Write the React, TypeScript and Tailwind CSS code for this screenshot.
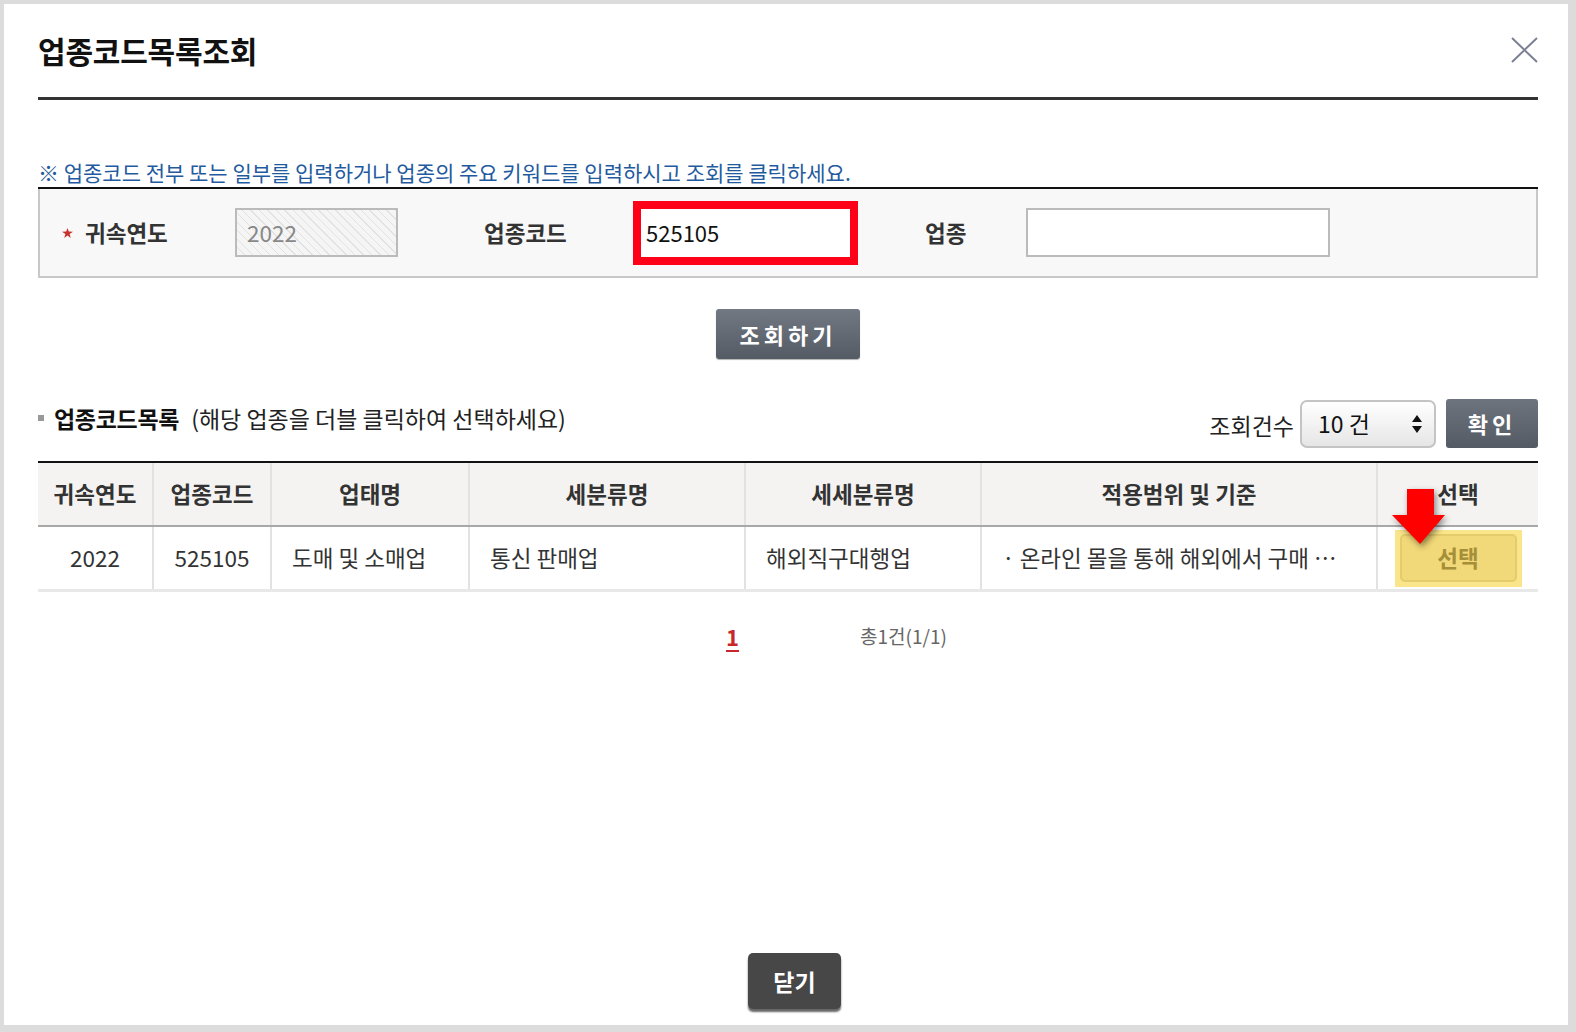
import React from 'react';

const cols = [
  { title: '귀속연도', value: '2022', center: true },
  { title: '업종코드', value: '525105', center: true },
  { title: '업태명', value: '도매 및 소매업', center: false },
  { title: '세분류명', value: '통신 판매업', center: false },
  { title: '세세분류명', value: '해외직구대행업', center: false },
  { title: '적용범위 및 기준', value: '· 온라인 몰을 통해 해외에서 구매 ⋯', center: false },
];

export default function App() {
  return (
    <div className="h-[1032px] w-[1576px] overflow-hidden bg-[#dcdcdc] pl-[4px] pt-[4px] font-[Noto_Sans_CJK_KR,sans-serif]">
      <div className="relative flex h-[1021px] w-[1564px] flex-col bg-white pl-[34px] pr-[30px]">
        {/* header */}
        <div className="flex h-[93px] items-start justify-between pt-[25px]">
          <h1 className="text-[30px] font-bold leading-[42px] tracking-[-0.2px] text-[#111]">
            업종코드목록조회
          </h1>
          <button className="mt-[8px]">
            <svg width="27" height="26" viewBox="0 0 27 26">
              <path d="M1 1 L26 25 M26 1 L1 25" stroke="#7b8194" strokeWidth="2" fill="none" />
            </svg>
          </button>
        </div>
        <div className="h-[3px] bg-[#333]" />

        <p className="mt-[60px] text-[21px] leading-[25px] text-[#1f5b9e]">
          ※ 업종코드 전부 또는 일부를 입력하거나 업종의 주요 키워드를 입력하시고 조회를 클릭하세요.
        </p>

        {/* search box */}
        <div className="mt-[2px] border-t-2 border-[#111]">
          <div className="flex h-[89px] items-center border-x-2 border-b-2 border-[#c8c8c8] bg-[#f8f8f8] pl-[22px]">
            <span className="w-[23px]">
              <svg width="11" height="10" viewBox="0 0 11 10">
                <path d="M5.5 0 L6.8 3.6 L11 3.8 L7.6 6.1 L8.8 10 L5.5 7.6 L2.2 10 L3.4 6.1 L0 3.8 L4.2 3.6 Z" fill="#c8322c" />
              </svg>
            </span>
            <span className="w-[150px] text-[22.5px] font-bold text-[#333]">귀속연도</span>
            <div className="flex h-[49px] w-[163px] items-center border-2 border-[#bbb] bg-[repeating-linear-gradient(45deg,#f5f5f5_0px,#f5f5f5_5px,#e2e2e2_5px,#e2e2e2_6px)] pl-[10px] text-[22.5px] text-[#888]">
              2022
            </div>
            <span className="ml-[86px] w-[149px] text-[22.5px] font-bold text-[#333]">업종코드</span>
            <div className="flex h-[64px] w-[225px] items-center border-[8px] border-[#ff0019] bg-white pl-[5px] text-[22px] text-[#111]">
              525105
            </div>
            <span className="ml-[67px] w-[101px] text-[22.5px] font-bold text-[#333]">업종</span>
            <div className="h-[49px] w-[304px] border-2 border-[#bbb] bg-white" />
          </div>
        </div>

        <div className="mt-[31px] flex justify-center">
          <button className="h-[50px] w-[144px] rounded-[3px] bg-gradient-to-b from-[#737983] to-[#555b65] text-[22px] font-bold tracking-[4px] text-white shadow-[0_1px_1px_rgba(0,0,0,0.3)]">
            조회하기
          </button>
        </div>

        {/* list header */}
        <div className="mt-[40px] flex h-[49px] items-start justify-between">
          <div className="flex items-center pt-[4px] leading-[30px]">
            <span className="mr-[10px] h-[6px] w-[6px] bg-[#999]" />
            <span className="text-[23px] font-bold tracking-[-0.3px] text-[#111]">업종코드목록</span>
            <span className="ml-[12px] text-[23px] text-[#222]">(해당 업종을 더블 클릭하여 선택하세요)</span>
          </div>
          <div className="flex h-[49px] items-center">
            <span className="mt-[4px] text-[23px] text-[#222]">조회건수</span>
            <div className="ml-[6px] flex h-[48px] w-[136px] items-center justify-between rounded-[7px] border-2 border-[#c4c4c4] bg-gradient-to-b from-white to-[#e6e6e6] pl-[16px] pr-[12px]">
              <span className="text-[23px] text-[#111]">10 건</span>
              <svg width="10" height="18" viewBox="0 0 10 18">
                <path d="M5 0 L10 7 L0 7 Z M0 11 L10 11 L5 18 Z" fill="#111" />
              </svg>
            </div>
            <button className="ml-[10px] h-[49px] w-[92px] rounded-[3px] bg-gradient-to-b from-[#6e747e] to-[#555b65] text-[22px] font-bold tracking-[4px] text-white">
              확인
            </button>
          </div>
        </div>

        {/* table */}
        <div className="mt-[13px] border-t-2 border-[#111]">
          <div className="grid h-[64px] grid-cols-[116px_118px_198px_276px_236px_396px_1fr] border-b-2 border-[#a8a8a8] bg-[#f4f3f2]">
            {cols.map((c) => (
              <div
                key={c.title}
                className="flex items-center justify-center border-r-2 border-[#e2e2e2] text-[22.5px] font-bold text-[#333]"
              >
                {c.title}
              </div>
            ))}
            <div className="flex items-center justify-center text-[22.5px] font-bold text-[#333]">선택</div>
          </div>
          <div className="grid h-[65px] grid-cols-[116px_118px_198px_276px_236px_396px_1fr] border-b-[3px] border-[#e8e8e8]">
            {cols.map((c) => (
              <div
                key={c.title}
                className={
                  c.center
                    ? 'flex items-center justify-center border-r-2 border-[#e2e2e2] text-[22.5px] text-[#333]'
                    : 'flex items-center border-r-2 border-[#e2e2e2] pl-[20px] text-[22.5px] text-[#333]'
                }
              >
                {c.value}
              </div>
            ))}
            <div className="flex items-center justify-center">
              <div className="flex h-[57px] w-[127px] items-center justify-center bg-[#fbe58a]">
                <button className="h-[48px] w-[117px] rounded-[5px] border-2 border-[#e4cc6c] bg-[#f1d878] text-[22.5px] font-bold text-[#a58f38]">
                  선택
                </button>
              </div>
            </div>
          </div>
        </div>

        {/* pagination */}
        <div className="mt-[32px] flex items-center pl-[688px] leading-[24px]">
          <span className="text-[22px] font-bold text-[#c8282c] underline underline-offset-[4px]">1</span>
          <span className="ml-[121px] text-[19px] text-[#666]">총1건(1/1)</span>
        </div>

        <div className="flex-1" />
        <div className="mb-[16px] flex pl-[710px]">
          <button className="h-[56px] w-[93px] rounded-[5px] bg-[#474747] text-[23px] font-bold text-white shadow-[0_3px_2px_rgba(0,0,0,0.6)]">
            닫기
          </button>
        </div>

        {/* red arrow overlay */}
        <svg
          className="absolute left-[1384px] top-[483px] drop-shadow-[2px_3px_3px_rgba(0,0,0,0.45)]"
          width="58"
          height="58"
          viewBox="0 0 58 58"
        >
          <path d="M19 2 L46 2 L46 28 L57 28 L32 57 L4 28 L19 28 Z" fill="#ff0000" />
        </svg>
      </div>
    </div>
  );
}
